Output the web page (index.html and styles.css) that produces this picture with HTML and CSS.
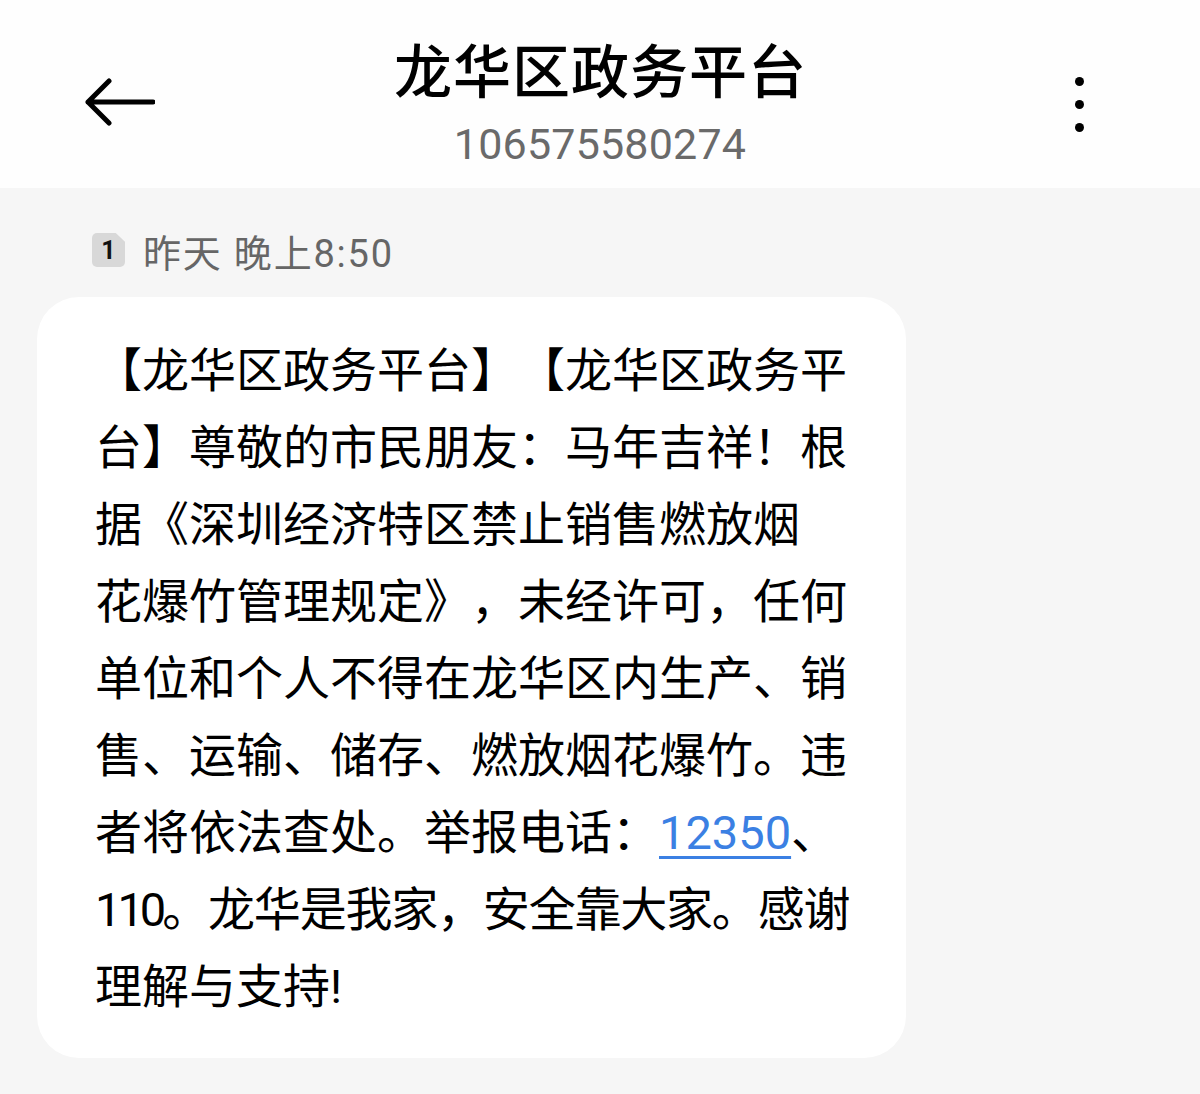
FILE: index.html
```html
<!DOCTYPE html>
<html lang="zh-CN">
<head>
<meta charset="utf-8">
<title>龙华区政务平台</title>
<link rel="stylesheet" href="styles.css">
</head>
<body>
<header class="topbar">
  <div class="back">
    <svg width="72" height="52" viewBox="0 0 72 52"><path d="M70 24H5M26 3L5 24L26 45" fill="none" stroke="#000" stroke-width="5" stroke-linecap="round" stroke-linejoin="round"/></svg>
  </div>
  <div class="titles">
    <div class="title">龙华区政务平台</div>
    <div class="number">106575580274</div>
  </div>
  <div class="more">
    <span class="dot"></span><span class="dot"></span><span class="dot"></span>
  </div>
</header>
<main class="thread">
  <div class="stamp">
    <span class="sim">1</span>
    <span class="time">昨天 晚上8:50</span>
  </div>
  <div class="bubble">【龙华区政务平台】【龙华区政务平<br>台】尊敬的市民朋友：马年吉祥！根<br>据《深圳经济特区禁止销售燃放烟<br>花爆竹管理规定》，未经许可，任何<br>单位和个人不得在龙华区内生产、销<br>售、运输、储存、燃放烟花爆竹。违<br>者将依法查处。举报电话：<a class="link">12350</a>、<br><span class="digits">110</span><span class="tight">。龙华是我家，安全靠大家。感谢</span><br>理解与支持!</div>
</main>
</body>
</html>
```

FILE: styles.css
```css
html, body {
  margin: 0;
  padding: 0;
}
body {
  width: 1200px;
  height: 1094px;
  background: #f6f6f6;
  font-family: "Roboto", "Noto Sans CJK SC", sans-serif;
  overflow: hidden;
}
.topbar {
  height: 188px;
  background: #fefefe;
  display: grid;
  grid-template-columns: 200px 1fr 200px;
  align-items: start;
}
.back {
  padding-left: 83px;
  padding-top: 78px;
}
.titles {
  display: flex;
  flex-direction: column;
  align-items: center;
  padding-top: 30px;
}
.title {
  font-family: "Noto Sans CJK SC", sans-serif;
  font-size: 58px;
  line-height: 76px;
  color: #000;
  letter-spacing: 1px;
  font-weight: 500;
  padding-left: 1px;
}
.number {
  font-size: 43px;
  line-height: 52px;
  margin-top: 12px;
  color: #6a6a6a;
  letter-spacing: 0.2px;
}
.more {
  justify-self: end;
  width: 40px;
  margin-right: 101px;
  padding-top: 77px;
  display: flex;
  flex-direction: column;
  align-items: center;
  gap: 14px;
}
.dot {
  width: 9px;
  height: 9px;
  border-radius: 50%;
  background: #000;
}
.thread {
  padding: 42px 0 0 37px;
}
.stamp {
  display: flex;
  align-items: center;
  height: 40px;
  padding-left: 55px;
  gap: 18px;
}
.sim {
  width: 33px;
  height: 34px;
  background: #d8d8d8;
  border-radius: 5px;
  clip-path: polygon(0 0, 72% 0, 100% 26%, 100% 100%, 0 100%);
  font-size: 25px;
  font-weight: 700;
  color: #111;
  display: flex;
  align-items: center;
  justify-content: center;
}
.time {
  font-size: 38px;
  letter-spacing: 1.8px;
  color: #666;
}
.bubble {
  margin-top: 27px;
  width: 811px;
  background: #fff;
  border-radius: 42px;
  padding: 35px 0 33px 58px;
  font-size: 47px;
  line-height: 77px;
  color: #000;
  white-space: nowrap;
  text-spacing-trim: space-all;
}
.link {
  color: #3b80e3;
  text-decoration: underline;
  text-decoration-thickness: 3px;
  text-underline-offset: 7px;
}
.digits {
  letter-spacing: -4px;
}
.tight {
  letter-spacing: -1.2px;
}
```
